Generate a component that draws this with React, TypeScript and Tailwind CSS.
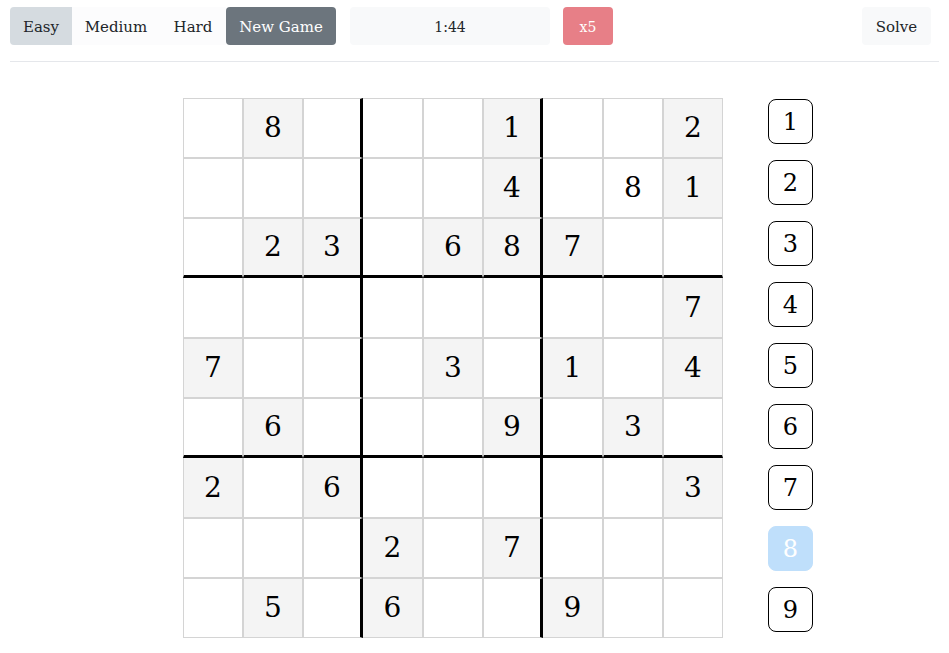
import { useState } from "react";

// 0 = empty; negative = entered by the player (shown on white)
const BOARD: number[][] = [
  [0, 8, 0, 0, 0, 1, 0, 0, 2],
  [0, 0, 0, 0, 0, 4, 0, -8, 1],
  [0, 2, 3, 0, 6, 8, 7, 0, 0],
  [0, 0, 0, 0, 0, 0, 0, 0, 7],
  [7, 0, 0, 0, 3, 0, 1, 0, 4],
  [0, 6, 0, 0, 0, 9, 0, 3, 0],
  [2, 0, 6, 0, 0, 0, 0, 0, 3],
  [0, 0, 0, 2, 0, 7, 0, 0, 0],
  [0, 5, 0, 6, 0, 0, 9, 0, 0],
];

const SERIF = { fontFamily: '"DejaVu Serif", "Liberation Serif", serif' };

export default function App() {
  const [level, setLevel] = useState("Easy");
  const [picked, setPicked] = useState(8);

  return (
    <div className="min-h-screen bg-white text-[#212529]" style={SERIF}>
      {/* Top bar */}
      <div className="mx-[10px] flex items-center border-b border-[#e5e7eb] pt-[7px] pb-[16px]">
        <div className="flex items-center">
          {["Easy", "Medium", "Hard"].map((l, i) => (
            <button
              key={l}
              onClick={() => setLevel(l)}
              className={`h-[38px] pt-[3px] text-[15px] ${i === 0 ? "w-[62px] rounded-l-[4px]" : i === 1 ? "w-[88px]" : "w-[66px]"} ${
                level === l ? "bg-[#d5dbe0]" : "bg-[#fcfcfd]"
              }`}
            >
              {l}
            </button>
          ))}
          <button className="h-[38px] w-[110px] rounded-[4px] bg-[#6c757d] pt-[3px] text-[15px] text-white">
            New Game
          </button>
        </div>
        <div className="ml-[14px] flex h-[38px] w-[200px] items-center justify-center rounded-[4px] bg-[#f8f9fa] pt-[3px] text-[14px]">
          1:44
        </div>
        <button className="ml-[13px] h-[38px] w-[50px] rounded-[4px] bg-[#e77f87] pt-[3px] text-[14px] text-white">
          x5
        </button>
        <button className="ml-auto mr-[8px] h-[38px] w-[69px] rounded-[4px] bg-[#f8f9fa] pt-[3px] text-[15px]">
          Solve
        </button>
      </div>

      {/* Board + number pad */}
      <div className="mt-[36px] flex items-start">
        <div className="ml-[183px] flex flex-col">
          {BOARD.map((row, r) => (
            <div key={r} className="flex">
              {row.map((v, c) => (
                <div
                  key={c}
                  className={`flex h-[60px] w-[60px] items-center justify-center border-[#d4d4d4] text-[28px] text-black ${
                    v > 0 ? "bg-[#f4f4f4]" : "bg-white"
                  } ${c === 2 || c === 5 ? "border-y border-l border-r-[3px] border-r-black" : "border"} ${
                    c === 3 || c === 6 ? "border-l-0" : ""
                  } ${r === 2 || r === 5 ? "border-b-[3px] border-b-black" : ""} ${
                    r === 3 || r === 6 ? "border-t-0" : ""
                  }`}
                >
                  {v !== 0 ? Math.abs(v) : ""}
                </div>
              ))}
            </div>
          ))}
        </div>

        <div className="ml-[45px] flex flex-col gap-[16px] pt-[1px]">
          {[1, 2, 3, 4, 5, 6, 7, 8, 9].map((n) => (
            <button
              key={n}
              onClick={() => setPicked(n)}
              className={`flex h-[45px] w-[45px] items-center justify-center rounded-[8px] text-[24px] ${
                picked === n
                  ? "border border-[#bfdffb] bg-[#bfdffb] text-white"
                  : "border border-black bg-white text-black"
              }`}
            >
              {n}
            </button>
          ))}
        </div>
      </div>
    </div>
  );
}
